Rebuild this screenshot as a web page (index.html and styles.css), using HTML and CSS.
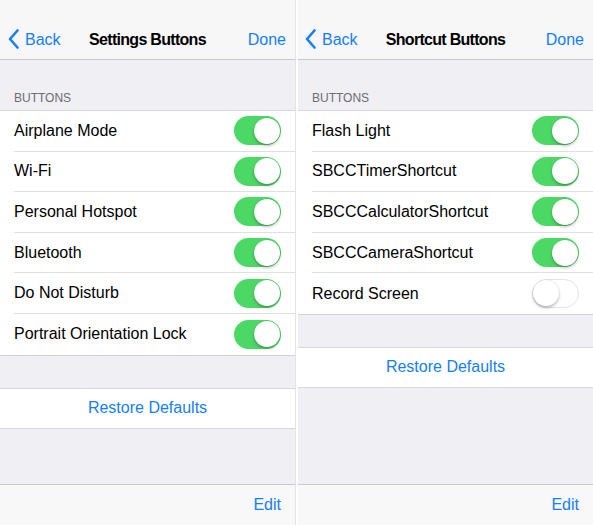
FILE: index.html
```html
<!DOCTYPE html>
<html>
<head>
<meta charset="utf-8">
<link rel="stylesheet" href="styles.css">
</head>
<body>
<div class="screen">
  <section class="panel panel-left">
    <header class="nav">
      <a class="back"><svg class="chevron" width="11" height="20" viewBox="0 0 11 20"><path d="M9.5 1.5 L2 10 L9.5 18.5" fill="none" stroke="#157efb" stroke-width="2.6" stroke-linecap="round" stroke-linejoin="round"/></svg>Back</a>
      <h1 class="title">Settings Buttons</h1>
      <a class="done">Done</a>
    </header>
    <div class="section-label">BUTTONS</div>
    <ul class="list">
      <li class="row"><span class="label">Airplane Mode</span><span class="switch on"></span></li>
      <li class="row"><span class="label">Wi-Fi</span><span class="switch on"></span></li>
      <li class="row"><span class="label">Personal Hotspot</span><span class="switch on"></span></li>
      <li class="row"><span class="label">Bluetooth</span><span class="switch on"></span></li>
      <li class="row"><span class="label">Do Not Disturb</span><span class="switch on"></span></li>
      <li class="row"><span class="label">Portrait Orientation Lock</span><span class="switch on"></span></li>
    </ul>
    <div class="action">Restore Defaults</div>
    <footer class="toolbar"><a class="edit">Edit</a></footer>
  </section>
  <section class="panel panel-right">
    <header class="nav">
      <a class="back"><svg class="chevron" width="11" height="20" viewBox="0 0 11 20"><path d="M9.5 1.5 L2 10 L9.5 18.5" fill="none" stroke="#157efb" stroke-width="2.6" stroke-linecap="round" stroke-linejoin="round"/></svg>Back</a>
      <h1 class="title">Shortcut Buttons</h1>
      <a class="done">Done</a>
    </header>
    <div class="section-label">BUTTONS</div>
    <ul class="list">
      <li class="row"><span class="label">Flash Light</span><span class="switch on"></span></li>
      <li class="row"><span class="label">SBCCTimerShortcut</span><span class="switch on"></span></li>
      <li class="row"><span class="label">SBCCCalculatorShortcut</span><span class="switch on"></span></li>
      <li class="row"><span class="label">SBCCCameraShortcut</span><span class="switch on"></span></li>
      <li class="row"><span class="label">Record Screen</span><span class="switch off"></span></li>
    </ul>
    <div class="action">Restore Defaults</div>
    <footer class="toolbar"><a class="edit">Edit</a></footer>
  </section>
</div>
</body>
</html>
```
FILE: styles.css
```css
* { box-sizing: border-box; }
html, body { margin: 0; padding: 0; background: #ffffff; }
body {
  font-family: "Liberation Sans", Arial, sans-serif;
  color: #000;
  width: 593px;
  height: 525px;
  overflow: hidden;
}
.screen {
  display: grid;
  grid-template-columns: 296px 295px;
  column-gap: 2px;
  height: 525px;
}
.panel {
  display: flex;
  flex-direction: column;
  background: #efeff4;
  height: 525px;
}
.panel-left { border-right: 1px solid #e4e4e8; }
.nav {
  height: 60px;
  padding-top: 20px;
  background: #f7f7f8;
  border-bottom: 1px solid #c9c9cd;
  display: grid;
  grid-template-columns: 1fr auto 1fr;
  align-items: center;
}
.back {
  display: flex;
  align-items: center;
  color: #157efb;
  font-size: 16px;
  padding-left: 8px;
  gap: 6px;
}
.panel-right .back { padding-left: 7px; }
.chevron { display: block; margin-top: -1px; }
.title {
  margin: 0;
  font-size: 16px;
  font-weight: bold;
  letter-spacing: -0.7px;
  color: #000;
}
.done {
  justify-self: end;
  color: #157efb;
  font-size: 16px;
  padding-right: 9px;
}
.section-label {
  font-size: 12px;
  color: #6d6d72;
  padding: 31px 0 0 14px;
  height: 50px;
  line-height: 14px;
}
.list {
  list-style: none;
  margin: 0;
  padding: 0;
  background: #fff;
  border-top: 1px solid #d8d8dc;
  border-bottom: 1px solid #d0d0d5;
}
.row {
  height: 40.6px;
  display: flex;
  align-items: center;
  justify-content: space-between;
  margin-left: 14px;
  padding-right: 14px;
  border-bottom: 1px solid #e0e0e4;
  font-size: 16px;
}
.row:last-child { border-bottom: none; }
.switch {
  position: relative;
  width: 47px;
  height: 29px;
  border-radius: 15px;
  flex: none;
}
.switch.on { background: #4cd864; }
.switch.off { background: #fff; border: 1.5px solid #e3e3e7; }
.switch::after {
  content: "";
  position: absolute;
  top: 1.5px;
  width: 26px;
  height: 26px;
  border-radius: 50%;
  background: #fff;
  box-shadow: 0 2px 3px rgba(0,0,0,0.25), 0 0 0 0.5px rgba(0,0,0,0.08);
}
.switch.on::after { right: 1.5px; }
.switch.off::after { left: 0; top: 0; }
.action {
  margin-top: 32px;
  height: 41px;
  background: #fff;
  border-top: 1px solid #d8d8dc;
  border-bottom: 1px solid #d8d8dc;
  display: flex;
  align-items: center;
  justify-content: center;
  color: #157efb;
  font-size: 16px;
}
.toolbar {
  margin-top: auto;
  height: 41px;
  background: #f8f8f9;
  border-top: 1px solid #c9c9cd;
  display: flex;
  align-items: center;
  justify-content: flex-end;
  padding-right: 14px;
}
.edit { color: #157efb; font-size: 16px; }
```
